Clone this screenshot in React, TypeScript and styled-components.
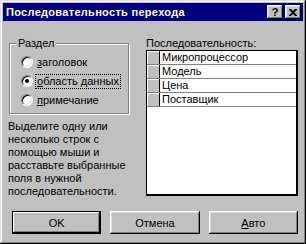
import React, {FC} from "react";
import styled, {createGlobalStyle} from "styled-components";

const Global = createGlobalStyle`
html, body {
  margin: 0;
  padding: 0;
  background: #c0c0c0;
}
body {
  font-family: "Liberation Sans", Arial, sans-serif;
  font-size: 11px;
  color: #000;
}
`;

const fields = ["Микропроцессор", "Модель", "Цена", "Поставщик"];

const App: FC = () => <>
  <Global/>
  <Window>
    <TitleBar>
      <Title>Последовательность перехода</Title>
      <Controls>
        <CtlButton>?</CtlButton>
        <CtlButton>
          <svg width="8" height="7" viewBox="0 0 8 7">
            <path d="M0 0h2l2 2 2-2h2v1L5 3.5 8 6v1H6L4 5 2 7H0V6l3-2.5L0 1z" fill="#000"/>
          </svg>
        </CtlButton>
      </Controls>
    </TitleBar>
    <Body>
      <Columns>
        <LeftCol>
          <Group>
            <Legend>Раздел</Legend>
            <Option>
              <Radio/>
              <OptLabel><u>з</u>аголовок</OptLabel>
            </Option>
            <Option>
              <Radio checked/>
              <OptLabel focused><u>о</u>бласть данных</OptLabel>
            </Option>
            <Option>
              <Radio/>
              <OptLabel><u>п</u>римечание</OptLabel>
            </Option>
          </Group>
          <Hint>
            Выделите одну или<br/>
            несколько строк с<br/>
            помощью мыши и<br/>
            расставьте выбранные<br/>
            поля в нужной<br/>
            последовательности.
          </Hint>
        </LeftCol>
        <RightCol>
          <ListLabel>Последовательность:</ListLabel>
          <ListBox>
            {fields.map(f => <Row key={f}>
              <Selector/>
              <Cell>{f}</Cell>
            </Row>)}
          </ListBox>
        </RightCol>
      </Columns>
      <Buttons>
        <Button isDefault>OK</Button>
        <Button>Отмена</Button>
        <Button><u>А</u>вто</Button>
      </Buttons>
    </Body>
  </Window>
</>;
export default App;

const Window = styled.div`
width: 306px;
height: 244px;
box-sizing: border-box;
padding: 3px;
background: #c0c0c0;
box-shadow: inset -1px -1px 0 #000, inset 1px 1px 0 #dfdfdf,
  inset -2px -2px 0 #808080, inset 2px 2px 0 #fff;
display: flex;
flex-direction: column;
`;

const TitleBar = styled.div`
height: 18px;
background: #000080;
display: flex;
align-items: center;
justify-content: space-between;
padding: 0 2px 0 3px;
`;

const Title = styled.div`
color: #fff;
font-weight: bold;
font-size: 11px;
letter-spacing: 0.3px;
`;

const Controls = styled.div`
display: flex;
gap: 2px;
`;

const CtlButton = styled.div`
width: 16px;
height: 14px;
box-sizing: border-box;
background: #c0c0c0;
box-shadow: inset -1px -1px 0 #000, inset 1px 1px 0 #fff,
  inset -2px -2px 0 #808080, inset 2px 2px 0 #dfdfdf;
display: flex;
align-items: center;
justify-content: center;
font-weight: bold;
font-size: 11px;
line-height: 1;
`;

const Body = styled.div`
flex: 1;
display: flex;
flex-direction: column;
padding: 11px 5px 0 6px;
`;

const Columns = styled.div`
display: flex;
gap: 17px;
`;

const LeftCol = styled.div`
width: 120px;
display: flex;
flex-direction: column;
`;

const Group = styled.div`
position: relative;
margin-top: 11px;
height: 71px;
box-sizing: border-box;
border: 1px solid #808080;
box-shadow: 1px 1px 0 #fff, inset 1px 1px 0 #fff;
padding: 11px 0 0 11px;
display: flex;
flex-direction: column;
gap: 5px;
`;

const Legend = styled.div`
position: absolute;
top: -7px;
left: 6px;
padding: 0 2px;
background: #c0c0c0;
line-height: 13px;
`;

const Option = styled.div`
display: flex;
align-items: center;
gap: 2px;
height: 14px;
`;

const Radio = styled.div<{checked?: boolean}>`
width: 12px;
height: 12px;
box-sizing: border-box;
border-radius: 50%;
background: #fff;
border: 1px solid;
border-color: #808080 #fff #fff #808080;
box-shadow: inset 1px 1px 0 #000, inset -1px -1px 0 #dfdfdf;
display: flex;
align-items: center;
justify-content: center;
&::after {
  content: "";
  width: 4px;
  height: 4px;
  border-radius: 50%;
  background: ${p => p.checked ? "#000" : "transparent"};
}
`;

const OptLabel = styled.span<{focused?: boolean}>`
padding: 0 1px;
line-height: 13px;
border: 1px dotted ${p => p.focused ? "#000" : "transparent"};
`;

const Hint = styled.div`
margin-top: 6px;
margin-left: -1px;
line-height: 13px;
white-space: nowrap;
`;

const RightCol = styled.div`
flex: 1;
display: flex;
flex-direction: column;
padding-top: 5px;
`;

const ListLabel = styled.div`
line-height: 13px;
`;

const ListBox = styled.div`
height: 146px;
box-sizing: border-box;
background: #fff;
border: 1px solid #000;
border-right-width: 2px;
border-bottom-width: 2px;
`;

const Row = styled.div`
display: flex;
height: 14px;
box-sizing: border-box;
border-bottom: 1px solid #808080;
`;

const Selector = styled.div`
width: 12px;
flex: none;
background: #c0c0c0;
border-right: 1px solid #000;
box-shadow: inset 1px 1px 0 #fff;
`;

const Cell = styled.div`
padding-left: 2px;
line-height: 13px;
`;

const Buttons = styled.div`
display: flex;
gap: 9px;
margin-top: 13px;
padding-left: 3px;
`;

const Button = styled.div<{isDefault?: boolean}>`
width: 90px;
height: 23px;
box-sizing: border-box;
background: #c0c0c0;
display: flex;
align-items: center;
justify-content: center;
box-shadow: ${p => p.isDefault
  ? "inset 0 0 0 1px #000, inset -2px -2px 0 #000, inset 2px 2px 0 #fff, inset -3px -3px 0 #808080"
  : "inset -1px -1px 0 #000, inset 1px 1px 0 #fff, inset -2px -2px 0 #808080, inset 2px 2px 0 #dfdfdf"};
`;
